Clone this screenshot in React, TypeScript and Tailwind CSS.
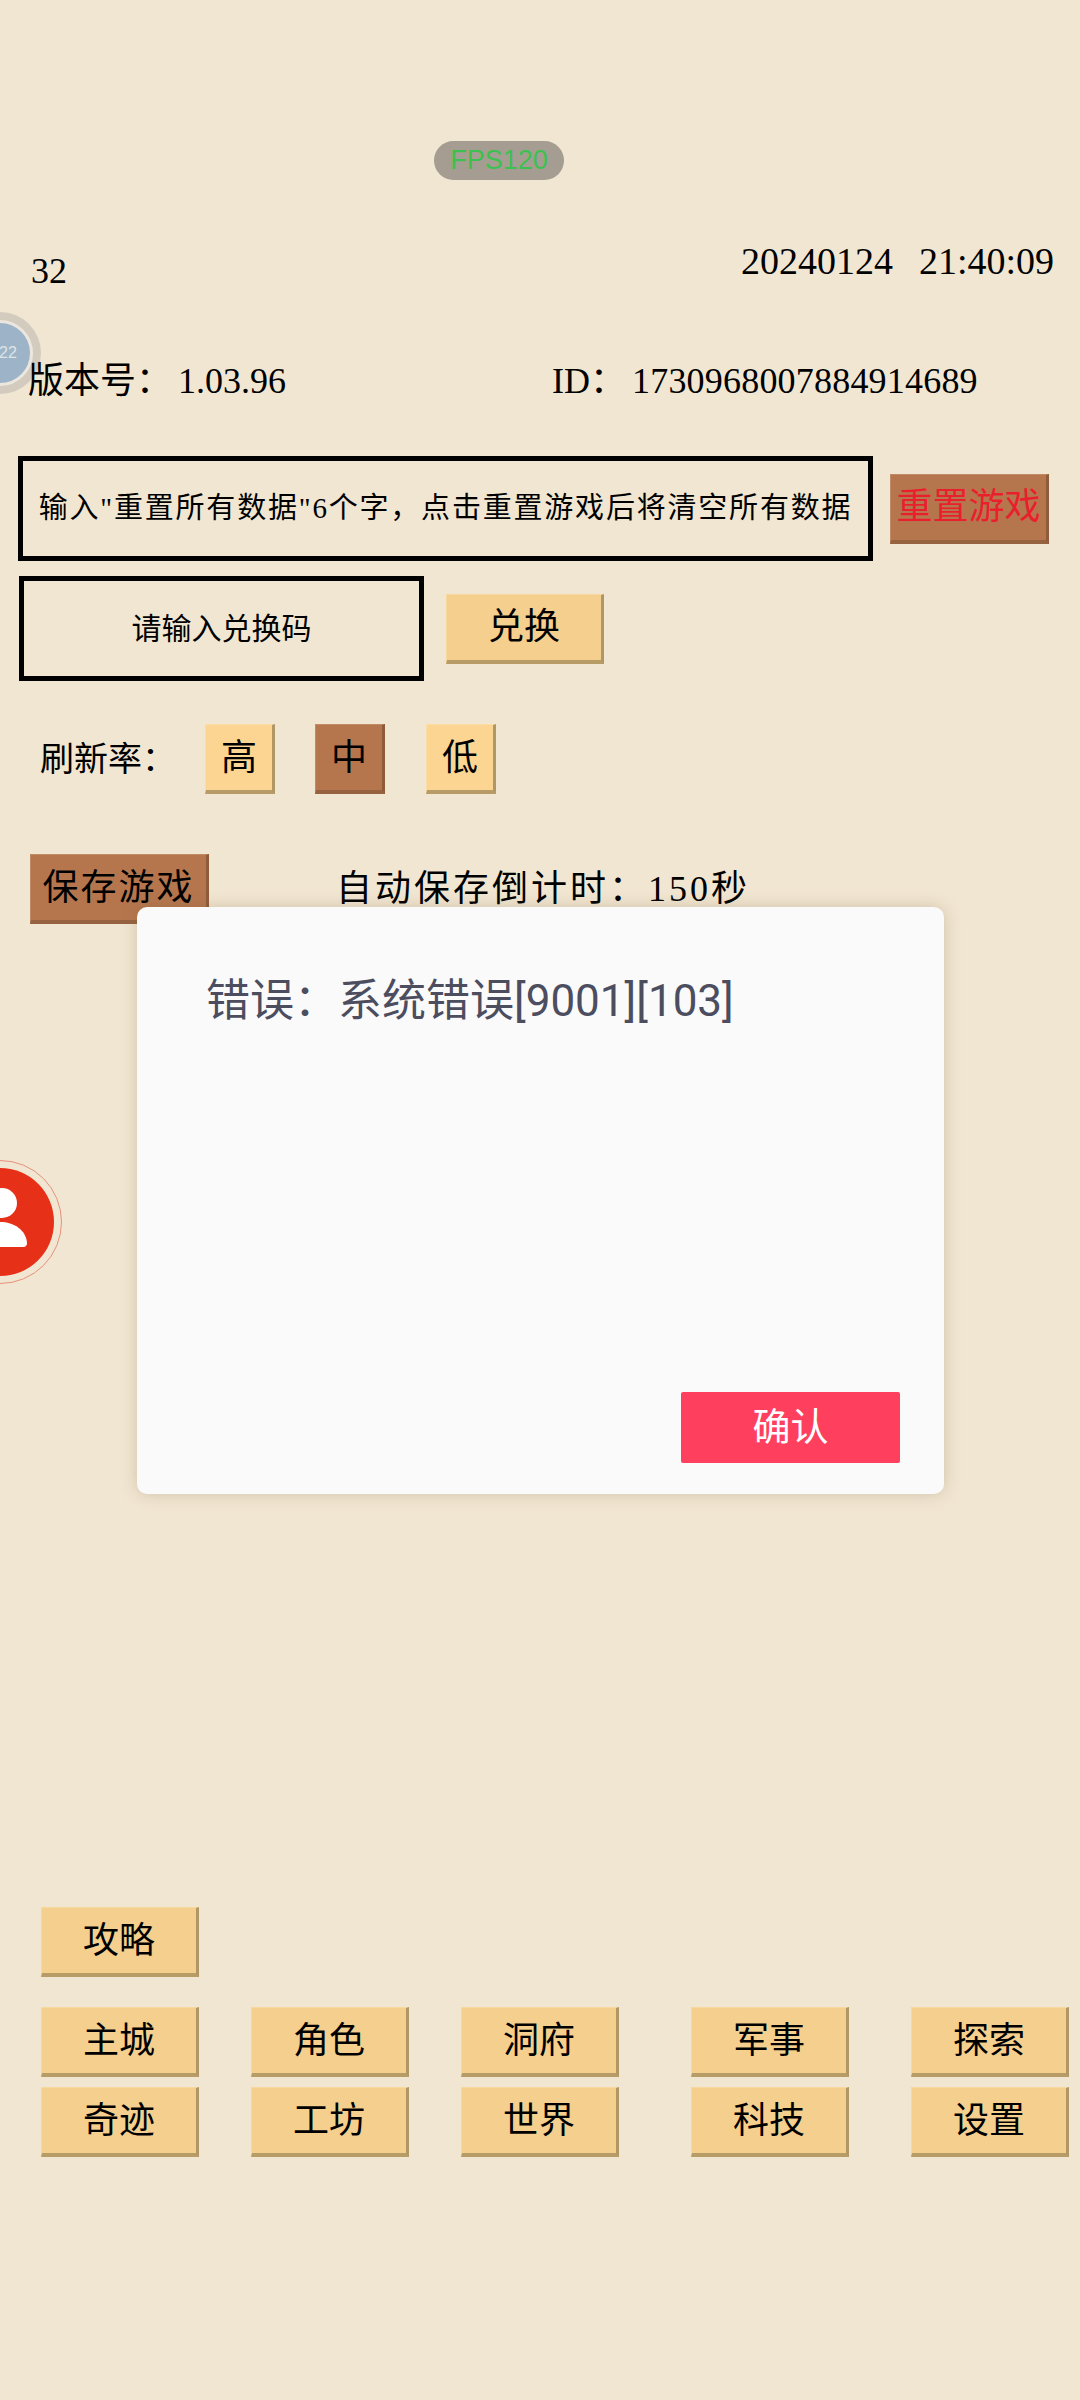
const brush = "font-['Liberation_Serif','Noto_Sans_CJK_SC',serif]";

const GameButton = ({
  label,
  tone = "sand",
  className = "w-[158px]",
}: {
  label: string;
  tone?: "sand" | "pale" | "brown";
  className?: string;
}) => {
  const tones = {
    sand: "bg-[#f4cf8d] border-t-[#f7d89f] border-l-[#f7d89f] border-r-[#b09765] border-b-[#b89c68]",
    pale: "bg-[#fdd592] border-t-[#fedca6] border-l-[#fedca6] border-r-[#b09765] border-b-[#b89c68]",
    brown: "bg-[#b5764e] border-t-[#c08a65] border-l-[#c08a65] border-r-[#8f5c3b] border-b-[#96623f]",
  };
  return (
    <div
      className={`flex h-[70px] items-center justify-center border-t border-l border-r-[3px] border-b-4 text-[36px] ${tones[tone]} ${className}`}
    >
      {label}
    </div>
  );
};

const navItems = ["主城", "角色", "洞府", "军事", "探索", "奇迹", "工坊", "世界", "科技", "设置"];

export default function App() {
  return (
    <div className={`relative h-[2400px] w-[1080px] overflow-hidden bg-[#f1e6d2] text-black ${brush}`}>
      <div className="flex justify-center pt-[141px] pr-[82px]">
        <div className="flex h-[39px] w-[130px] items-center justify-center rounded-full bg-[#a59d91] font-['Liberation_Sans',sans-serif] text-[27px] text-[#3cc150]">
          FPS120
        </div>
      </div>

      <div className="mt-[66px] flex items-start justify-between pl-[31px] pr-[26px] text-[38px] leading-[42px]">
        <span className="mt-[4px] text-[36px]">32</span>
        <span className="-mt-[6px] flex gap-[26px]">
          <span>20240124</span>
          <span>21:40:09</span>
        </span>
      </div>

      <div className="relative z-10 mt-[67px] flex pl-[28px] text-[36px] leading-[44px]">
        <span className="w-[524px]">
          <span className="mr-[6px]">版本号：</span>1.03.96
        </span>
        <span>
          <span className="mr-[6px]">ID：</span>
          <span className="tracking-[0.2px]">1730968007884914689</span>
        </span>
      </div>

      <div className="mt-[53px] flex items-center pl-[18px]">
        <div className="flex h-[105px] w-[855px] items-center justify-center border-[5px] border-black text-[29px] tracking-[1.8px]">
          输入"重置所有数据"6个字，点击重置游戏后将清空所有数据
        </div>
        <GameButton label="重置游戏" tone="brown" className="ml-[17px] w-[159px] text-[#ea1f2d]" />
      </div>

      <div className="mt-[15px] flex items-center pl-[19px]">
        <div className="flex h-[105px] w-[405px] items-center justify-center border-[5px] border-black text-[30px]">
          请输入兑换码
        </div>
        <GameButton label="兑换" className="ml-[22px] w-[158px]" />
      </div>

      <div className="mt-[43px] flex items-center pl-[40px]">
        <span className="w-[165px] text-[34px]">刷新率：</span>
        <GameButton label="高" tone="pale" className="w-[70px]" />
        <GameButton label="中" tone="brown" className="ml-[40px] w-[70px]" />
        <GameButton label="低" tone="pale" className="ml-[41px] w-[70px]" />
      </div>

      <div className="mt-[60px] flex items-center pl-[30px]">
        <GameButton label="保存游戏" tone="brown" className="w-[179px] tracking-[2px]" />
        <span className="ml-[127px] text-[36px] tracking-[3px]">自动保存倒计时：150秒</span>
      </div>

      <div className="mt-[983px] pl-[41px]">
        <GameButton label="攻略" />
      </div>

      <div className="mt-[30px] grid grid-cols-[210px_210px_230px_220px_158px] gap-y-[10px] pl-[41px]">
        {navItems.map((item) => (
          <GameButton key={item} label={item} />
        ))}
      </div>

      {/* floating badges stuck to the left edge */}
      <div className="absolute left-[-41px] top-[312px] flex h-[82px] w-[82px] items-center justify-center rounded-full bg-[#d3ccbe]">
        <div className="flex h-[66px] w-[66px] items-center justify-center rounded-full border-[3px] border-[#ece7de] bg-[#9db3c8]">
          <span className="ml-[16px] font-['Liberation_Sans',sans-serif] text-[16px] text-[#dfe3e6]">22</span>
        </div>
      </div>

      <div className="absolute left-[-62px] top-[1160px] flex h-[124px] w-[124px] items-center justify-center rounded-full border border-[#e8907f]">
        <div className="h-[108px] w-[108px] rounded-full bg-[#e63118]" />
        <svg className="absolute left-[61px] top-[22px]" width="30" height="70" viewBox="0 0 30 70">
          <circle cx="2" cy="20" r="15" fill="#fff" />
          <path d="M0 39c14 0 26 8 27 21a4 4 0 0 1-3 4H0z" fill="#fff" />
        </svg>
      </div>

      {/* error dialog */}
      <div className="absolute left-[137px] top-[907px] flex h-[587px] w-[807px] flex-col rounded-[10px] bg-[#fafafa] px-[69px] pt-[64px] shadow-[0_0_16px_rgba(120,90,50,0.25)] font-['Roboto','Noto_Sans_CJK_SC',sans-serif]">
        <div className="text-[44px] leading-[60px] text-[#4c4d5f]">错误：系统错误[9001][103]</div>
        <div className="absolute bottom-[31px] right-[44px] flex h-[71px] w-[219px] items-center justify-center rounded-[2px] bg-[#fe3f5e] text-[38px] text-white">
          确认
        </div>
      </div>
    </div>
  );
}
